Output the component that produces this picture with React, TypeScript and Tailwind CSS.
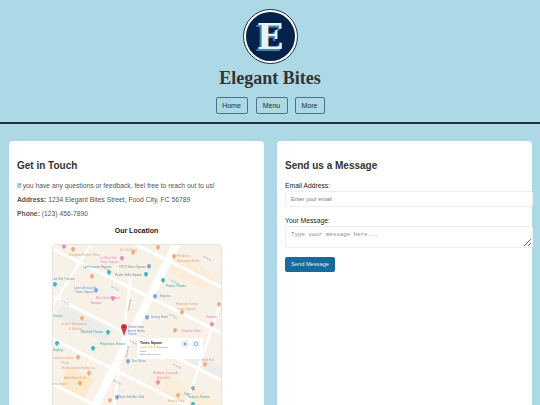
const pins: [number, number, string][] = [
  [20,4,"#f2ab80"],[80,7,"#f2ab80"],[39,31,"#f2ab80"],[29,73,"#f2ab80"],[25,112,"#f2ab80"],[36,128,"#f2ab80"],[27,138,"#f2ab80"],[57,155,"#f2ab80"],
  [105,2,"#f2ab80"],[121,11,"#f2ab80"],[129,67,"#f2ab80"],[166,59,"#f2ab80"],[122,85,"#f2ab80"],[152,119,"#f2ab80"],[125,150,"#f2ab80"],
  [69,13,"#e488c0"],[60,53,"#e488c0"],[159,79,"#e488c0"],[105,137,"#e488c0"],[11,1,"#e488c0"],
  [56,27,"#3cb8c0"],[2,39,"#3cb8c0"],[55,87,"#3cb8c0"],[4,98,"#3cb8c0"],[40,103,"#3cb8c0"],[93,29,"#3cb8c0"],[110,35,"#3cb8c0"],[140,159,"#3cb8c0"],
  [43,45,"#78a6e4"],[75,116,"#78a6e4"],[64,152,"#85a6cc"],[96,21,"#78a6e4"],[102,51,"#78a6e4"],[94,72,"#78a6e4"],[140,143,"#94acbe"],
];
const labels: [number, number, string, string][] = [
  [16,11,"Pasquale Perfect Pizza","#e8a078"],[47,14,"Le New York","#e088b8"],[47,18,"Times Square","#e088b8"],[67,6,"Din Tai Fung","#e8a078"],
  [66,23,"TKTS Times Square","#70909f"],[30,23,"Lyft Fontaine Theatre","#45a8b0"],[62,31,"Parker Buffy Square","#70909f"],[-1,35,"Lion 90s Theatre","#45a8b0"],
  [21,44,"Lion's Musical of","#6a96d0"],[22,48,"Times Square","#6a96d0"],[43,54,"New York Marriott","#e088b8"],[38,58.5,"Marquis","#e088b8"],
  [-1,72,"Theatre","#45a8b0"],[8,80,"Junior's Restaurant","#e8a078"],[16,84.5,"& Bakery","#e8a078"],[28,88,"Minskoff Theatre","#45a8b0"],
  [47,100,"Playstation Theater","#45a8b0"],[0,106,"Gayling","#45a8b0"],[-1,114,"Carmine's Italian","#e8a078"],[8,118.5,"Times","#e8a078"],
  [9,124,"Bubba Gump Shrimp Co.","#e8a078"],[11,134,"Blank Rock Cafe","#e8a078"],[-1,140,"New Guest","#e8a078"],[66,153,"New York Bar Club","#70909f"],
  [124,12,"Hendrick's","#e8a078"],[124,16.5,"Grosvenor Hotel","#e8a078"],[113,42,"Palace Theatre","#45a8b0"],[107,52,"Express","#70909f"],
  [123,60,"Hampton Dental","#e8a078"],[124,64.5,"Times Square","#e8a078"],[98,73,"Disney Store","#6a96d0"],
  [129,87,"Kimpton Hotel","#e088b8"],[153,73,"Kimpton","#e088b8"],[148,116,"Hotel Pod","#e8a078"],
  [100,129,"Madame Tussauds","#e088b8"],[104,133.5,"New York","#e088b8"],[131,150,"Tiger","#70909f"],[115,157,"Hard & Fish","#e8a078"],
  [135,153,"Belasco Theatre","#45a8b0"],[79,116.5,"Des Nains","#6a96d0"],
];
const streetNames: [number, number, string][] = [
  [48,22,"W 47 St"],[58,42,"W 47 St"],[8,56,"W 46 St"],[76,96,"W 46 St"],[116,70,"W 45 St"],[118,36,"W 45 St"],[120,120,"W 44 St"],[60,136,"W 44 St"],[150,12,"W 46 St"],
];
const cross = [-42,4,51,94,139];

function MapArt() {
  return (
    <svg viewBox="0 0 170 175" className="block w-[170px] h-[175px] blur-[0.3px]" style={{ fontFamily: '"Liberation Sans", sans-serif' }}>
      <rect width="170" height="175" fill="#f8f1e8" />
      <polygon points="16,122 42,134 30,154 8,140" fill="#fbe9cc" />
      <polygon points="112,4 166,30 150,44 108,24" fill="#fbedd9" />
      <polygon points="106,125 170,158 170,175 96,145" fill="#faeeda" />
      <polygon points="122,98 170,122 170,135 116,108" fill="#ececea" />
      <polygon points="10,60 60,86 52,98 2,72" fill="#ececea" />
      {cross.map((y) => (
        <line key={y} x1="-10" y1={y - 5} x2="180" y2={y + 90} stroke="#ffffff" strokeWidth="3" />
      ))}
      <line x1="125" y1="-4" x2="35" y2="175" stroke="#ffffff" strokeWidth="8" />
      <line x1="78" y1="30" x2="60" y2="170" stroke="#ffffff" strokeWidth="2.4" />
      <line x1="170" y1="50" x2="128" y2="175" stroke="#ffffff" strokeWidth="2.4" />
      <line x1="40" y1="-4" x2="-6" y2="70" stroke="#ffffff" strokeWidth="2.4" />
      {streetNames.map(([x, y, t]) => (
        <text key={`${t}${x}`} x={x} y={y} fontSize="2.4" fill="#8a8f94" transform={`rotate(27 ${x} ${y})`}>{t}</text>
      ))}
      <text x="76" y="66" fontSize="2.6" fill="#8a8f94" transform="rotate(-80 76 66)">Broadway</text>
      <text x="74" y="112" fontSize="2.6" fill="#8a8f94" transform="rotate(-80 74 112)">Broadway</text>
      {labels.map(([x, y, t, c]) => (
        <text key={`${t}${x}`} x={x} y={y} fontSize="3" fill={c}>{t}</text>
      ))}
      {pins.map(([x, y, c], i) => (
        <g key={i}>
          <circle cx={x} cy={y} r="2" fill={c} />
          <path d={`M${x - 1.5} ${y + 1.1}L${x} ${y + 3.3}L${x + 1.5} ${y + 1.1}Z`} fill={c} />
        </g>
      ))}
      <circle cx="71" cy="82" r="3" fill="#dc3a3e" />
      <path d="M68.4 83.5L71 91L73.6 83.5Z" fill="#dc3a3e" />
      <circle cx="71" cy="82" r="1" fill="#8e1c22" />
      <text x="75" y="83" fontSize="2.7" fill="#5a8cd0">United States</text>
      <text x="75" y="86.5" fontSize="2.7" fill="#5a8cd0">Armed Forces</text>
      <text x="75" y="90" fontSize="2.7" fill="#5a8cd0">Station</text>
      <rect x="84" y="93" width="66" height="21" fill="#ffffff" />
      <text x="87" y="99" fontSize="3.4" fontWeight="700" fill="#222222">Times Square</text>
      <text x="87" y="103" fontSize="2.4" fill="#666666">4.7</text>
      <text x="91" y="103" fontSize="2.6" fill="#f4b400">★★★★★</text>
      <text x="105" y="103" fontSize="2.4" fill="#666666">(143,110)</text>
      <text x="87" y="106.5" fontSize="2.4" fill="#666666">Place</text>
      <text x="87" y="110" fontSize="2.4" fill="#666666">Open until 7:00 PM</text>
      <circle cx="132" cy="99" r="4.5" fill="#f0f3f8" />
      <circle cx="132" cy="99" r="1.4" fill="#78a6e4" />
      <circle cx="143" cy="99" r="4.5" fill="#f0f3f8" />
      <rect x="141.7" y="97.7" width="2.6" height="2.6" fill="none" stroke="#78a6e4" strokeWidth="0.7" />
    </svg>
  );
}

const navBtn = "h-[17px] border border-[#4a7285] rounded-[2px] text-[7px] leading-none text-[#2a2a2a]";

export default function App() {
  return (
    <div className="h-[405px] overflow-hidden bg-[#add8e6] font-['Liberation_Sans',Arial,sans-serif] text-[#333333]">
      <header className="h-[124px] flex flex-col items-center pt-[9px] border-b-2 border-[#26333f]">
        <div className="w-[55px] h-[55px] rounded-full border border-[#1a2e44] bg-white p-[2px]">
          <div className="w-full h-full rounded-full bg-[#03224c] flex items-center justify-center overflow-hidden">
            <span className="font-['DejaVu_Serif',serif] font-bold text-[35px] leading-none text-[#e2f5fc] [text-shadow:-2px_2px_0_#4f7f9c]">E</span>
          </div>
        </div>
        <h1 className="mt-[3px] font-['Liberation_Serif',serif] font-bold text-[18px] leading-[22px] text-[#333333]">Elegant Bites</h1>
        <nav className="mt-[8px] flex">
          <button className={`w-[32px] ${navBtn}`}>Home</button>
          <button className={`ml-[8px] w-[32px] ${navBtn}`}>Menu</button>
          <button className={`ml-[7px] w-[30px] ${navBtn}`}>More</button>
        </nav>
      </header>
      <main className="grid grid-cols-2 gap-[13px] pl-[9px] pr-[8px] pt-[17px]">
        <section className="h-[400px] bg-white rounded-[4px] px-[8px] pt-[17px]">
          <h2 className="text-[10px] leading-[15px] font-bold text-[#333333]">Get in Touch</h2>
          <p className="mt-[8px] text-[6.75px] leading-[10px] text-[#555555]">If you have any questions or feedback, feel free to reach out to us!</p>
          <p className="mt-[4px] text-[6.75px] leading-[10px] text-[#555555]"><b>Address:</b> 1234 Elegant Bites Street, Food City, FC 56789</p>
          <p className="mt-[4px] text-[6.75px] leading-[10px] text-[#555555]"><b>Phone:</b> (123) 456-7890</p>
          <h3 className="mt-[7px] text-center text-[7px] leading-[10px] font-bold text-[#222222]">Our Location</h3>
          <div className="mx-auto mt-[8px] w-[170px] h-[225px] rounded-[4px] border border-[#e4e4e4] overflow-hidden">
            <MapArt />
          </div>
        </section>
        <section className="h-[400px] bg-white rounded-[4px] px-[8px] pt-[17px]">
          <h2 className="text-[10px] leading-[15px] font-bold text-[#333333]">Send us a Message</h2>
          <label className="block mt-[7px] text-[6.75px] leading-[11px] text-[#222222]">Email Address:</label>
          <input placeholder="Enter your email" className="block w-[248px] h-[16px] px-[5px] border border-[#eeeeee] rounded-[2px] text-[5.6px] placeholder:text-[#777777] outline-none" />
          <label className="block mt-[8px] text-[6.75px] leading-[11px] text-[#222222]">Your Message:</label>
          <textarea placeholder="Type your message here..." className="block w-[248px] h-[22px] px-[5px] py-[4px] border border-[#eeeeee] rounded-[2px] text-[5.8px] leading-[7px] font-['Liberation_Mono',monospace] placeholder:text-[#888888] outline-none" />
          <button className="mt-[9px] w-[50px] h-[15px] rounded-[2px] bg-[#176a9c] text-[5.7px] leading-none text-[#e6f0f6]">Send Message</button>
        </section>
      </main>
    </div>
  );
}
